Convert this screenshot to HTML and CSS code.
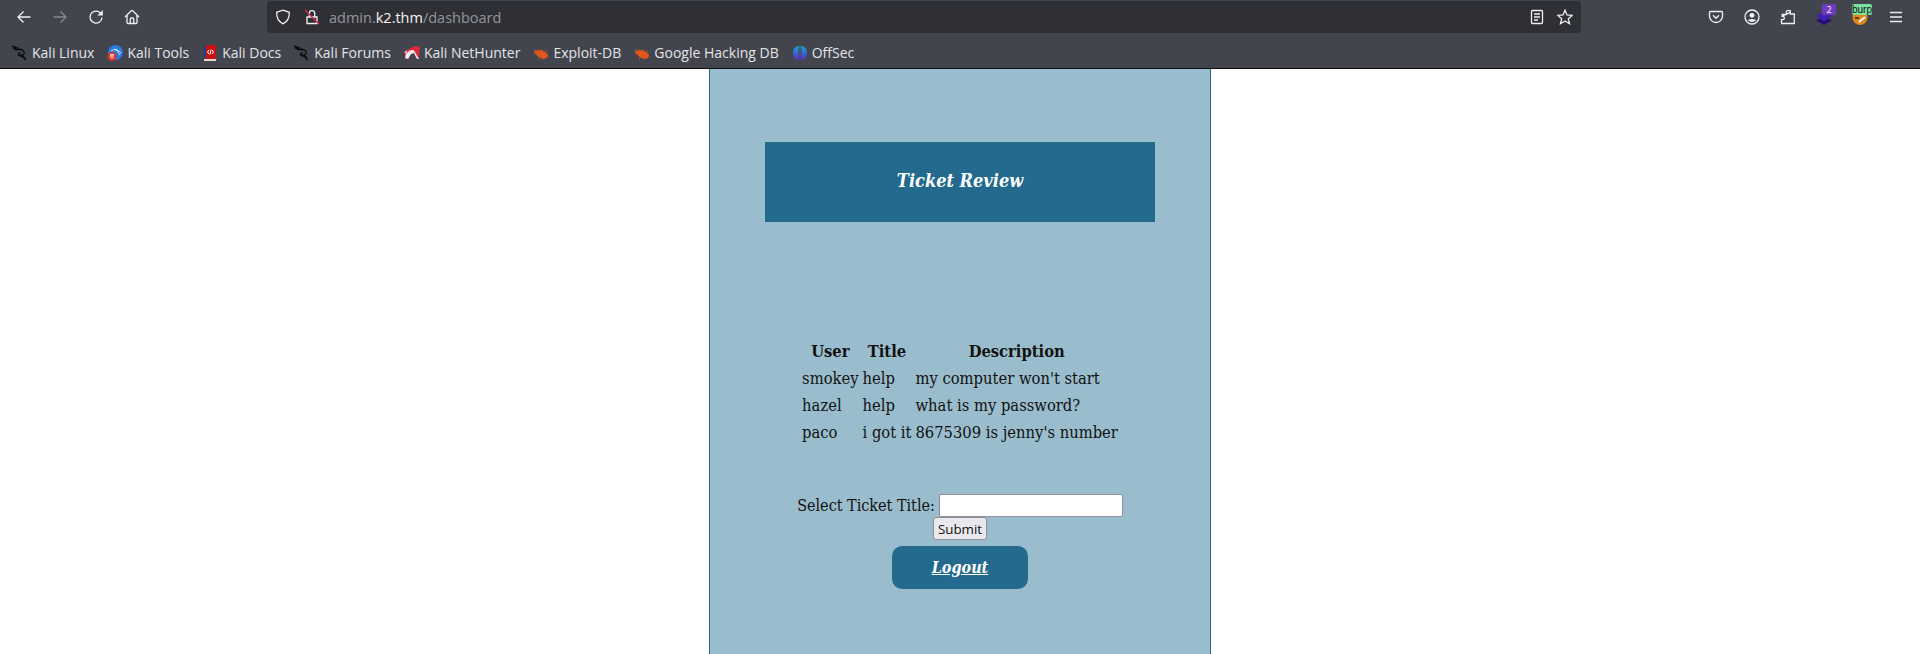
FILE: index.html
```html
<!DOCTYPE html>
<html>
<head>
    <title>Ticket Review</title>
    <link rel="stylesheet" href="styles.css">
</head>
<body>
    <div class="browser">
        <div class="toolbar">
            <div class="nav">
                <svg class="icon" viewBox="0 0 16 16"><path d="M14.500 8H2M7.500 2.500 2 8l5.500 5.500"/></svg>
                <svg class="icon dim" viewBox="0 0 16 16"><path d="M1.500 8H14M8.500 2.500 14 8l-5.500 5.500"/></svg>
                <svg class="icon" viewBox="0 0 16 16"><path d="M14 8.500A6 6 0 1 1 11.500 3.200L14 5.500"/><path class="solid" d="M14.800 1v5.500H9.300z"/></svg>
                <svg class="icon" viewBox="0 0 16 16"><path d="M1 8 7.300 1.700q.7-.6 1.400 0L15 8M3 6.500v7q0 1 1 1h8q1 0 1-1v-7M6.300 14.500V10q0-1 1-1h1.400q1 0 1 1v4.500"/></svg>
            </div>
            <div class="urlbar">
                <svg class="icon" viewBox="0 0 16 16"><path d="M8 1.200 14.300 3.300C14.500 9 12 13 8 14.800 4 13 1.500 9 1.700 3.300z"/></svg>
                <svg class="icon lock" viewBox="0 0 16 16"><path d="M3 8h10v6.500H3zM5.300 8V4.300a2.700 2.700 0 0 1 5.400 0V8"/><path class="strike" d="M1 1 15 15"/></svg>
                <span class="url">admin.<b>k2.thm</b>/dashboard</span>
                <span class="url-end">
                    <svg class="icon" viewBox="0 0 16 16"><path d="M3.500 1.500h9q1 0 1 1v11q0 1-1 1h-9q-1 0-1-1v-11q0-1 1-1zM5 5h6M5 8h6M5 11h4"/></svg>
                    <svg class="icon" viewBox="0 0 16 16"><path d="M8 1.200 10 6l5.200.4-3.900 3.300 1.200 5L8 12l-4.500 2.700 1.200-5L.8 6.400 6 6z"/></svg>
                </span>
            </div>
            <div class="tools">
                <svg class="icon" viewBox="0 0 16 16"><path d="M2.500 2.500h11q1 0 1 1V7a6.500 6.500 0 0 1-13 0V3.500q0-1 1-1zM5 6.300l3 3 3-3"/></svg>
                <svg class="icon" viewBox="0 0 16 16"><circle cx="8" cy="8" r="7"/><circle class="solid" cx="8" cy="6.300" r="2.400"/><path class="solid" d="M3.800 11.300q4.200-2.400 8.400 0-4.200 3.200-8.400 0z"/></svg>
                <svg class="icon" viewBox="0 0 16 16"><path d="M1.500 5.500h4.800V3.300a2 2 0 0 1 4 0V1h0M10.300 3.300V5h4v9.500H1.500v-3.800h1.200a1.700 1.700 0 0 0 0-3.400H1.500z"/></svg>
                <span class="ext">
                    <svg class="ext-icon" viewBox="0 0 16 16"><path fill="#2a0c78" d="M8 7 16 11.500 8 16 0 11.500z"/><path fill="#4420a8" d="M8 1.500 16 7 8 12.500 0 7z"/></svg>
                    <span class="badge purple">2</span>
                </span>
                <span class="ext">
                    <svg class="ext-icon" viewBox="0 0 16 16"><circle cx="8" cy="8.500" r="7.500" fill="#e2861c"/><path d="M3 9h4" stroke="#3a2410" stroke-width="1.500" fill="none"/><path d="M7 13l6-5" stroke="#fff" stroke-width="1.800" fill="none"/></svg>
                    <span class="badge green">burp</span>
                </span>
                <svg class="icon" viewBox="0 0 16 16"><path d="M2 3.500h12M2 8h12M2 12.500h12"/></svg>
            </div>
        </div>
        <div class="bookmarks">
            <span class="bm"><svg viewBox="0 0 16 16"><path class="dragon" d="M0 1l4 1.500-3 .5 4 .8-2 1 5-.5q5 1 4 4.500-1 2-4 1 4 1 5.500 5-2-3.500-6-4.300-3-1.500 1-3"/></svg>Kali Linux</span>
            <span class="bm"><svg viewBox="0 0 16 16"><circle cx="8.500" cy="7.500" r="7.500" fill="#2c7be0"/><path d="M4 6q5-4 10 2M7 4q4 1 6 6" stroke="#d8e8fa" fill="none"/><circle cx="5" cy="11.500" r="4.500" fill="#e23028"/><path d="M3 9.700h4M4 10v3.500M6 10v3.500" stroke="#fff"/></svg>Kali Tools</span>
            <span class="bm"><svg viewBox="0 0 16 16"><rect x="2" y="0" width="12" height="15" fill="#c81414"/><rect x="2" y="0" width="2" height="15" fill="#24408c"/><rect x="2" y="14" width="12" height="2" fill="#e8d8c8"/><path d="M7 5 5.500 7 7 9M10 5l1.500 2L10 9M9.200 4.500 7.800 9.500" stroke="#fff" fill="none"/></svg>Kali Docs</span>
            <span class="bm"><svg viewBox="0 0 16 16"><path class="dragon" d="M0 1l4 1.500-3 .5 4 .8-2 1 5-.5q5 1 4 4.500-1 2-4 1 4 1 5.500 5-2-3.500-6-4.300-3-1.500 1-3"/></svg>Kali Forums</span>
            <span class="bm"><svg viewBox="0 0 16 16"><path fill="#e0283c" d="M1 6 11 1l5 1-1 10-2 2-3-6-3 1-3 5H1z"/><path fill="#eee" d="M0 8 3 5l-2 8 3 1 3-5 3-1 3 6h2L10 5.500Q6 4 3 8z"/></svg>Kali NetHunter</span>
            <span class="bm"><svg viewBox="0 0 16 16"><g class="bug"><ellipse cx="9" cy="9.500" rx="6" ry="3.500" transform="rotate(20 9 9.500)"/><circle cx="3.500" cy="7.500" r="1.800"/><path d="M2 7 0 6M3 6 1.500 3.500M6 7 5 4M9 7l0-3M12 8l2-3M6 12l-1 3M10 13l0 2"/></g></svg>Exploit-DB</span>
            <span class="bm"><svg viewBox="0 0 16 16"><g class="bug"><ellipse cx="9" cy="9.500" rx="6" ry="3.500" transform="rotate(20 9 9.500)"/><circle cx="3.500" cy="7.500" r="1.800"/><path d="M2 7 0 6M3 6 1.500 3.500M6 7 5 4M9 7l0-3M12 8l2-3M6 12l-1 3M10 13l0 2"/></g></svg>Google Hacking DB</span>
            <span class="bm"><svg viewBox="0 0 16 16"><defs><linearGradient id="offsec" x1="0" y1="0" x2="0" y2="1"><stop offset="0" stop-color="#1fa0d8"/><stop offset="1" stop-color="#5a28c8"/></linearGradient></defs><path fill="url(#offsec)" d="M6.500.8V15A7.300 7.300 0 0 1 6.500.8zM9.500.8V15A7.300 7.300 0 0 0 9.500.8zM7.500 1h1v15h-1z"/></svg>OffSec</span>
        </div>
    </div>

    <div class="page">
        <div class="panel">
            <div class="heading">Ticket Review</div>
            <table class="tickets">
                <tr>
                    <th>User</th>
                    <th>Title</th>
                    <th>Description</th>
                </tr>
                <tr>
                    <td>smokey</td>
                    <td>help</td>
                    <td>my computer won't start</td>
                </tr>
                <tr>
                    <td>hazel</td>
                    <td>help</td>
                    <td>what is my password?</td>
                </tr>
                <tr>
                    <td>paco</td>
                    <td>i got it</td>
                    <td>8675309 is jenny's number</td>
                </tr>
            </table>
            <form class="ticket-form">
                <div class="form-row">
                    <label for="title">Select Ticket Title:</label>
                    <input type="text" id="title" />
                </div>
                <button type="button">Submit</button>
            </form>
            <a class="logout" href="#">Logout</a>
        </div>
    </div>
</body>
</html>
```

FILE: styles.css
```css
html, body {
    height: 100%;
}

body {
    margin: 0;
    background-color: #fff;
    display: flex;
    flex-direction: column;
    overflow: hidden;
    font-family: "DejaVu Serif Condensed", "DejaVu Serif", serif;
    font-size: 16px;
    color: #111;
}

.browser {
    background-color: #42454e;
    border-bottom: 1px solid #0c0c0d;
    font-family: "Open Sans", "Noto Sans", sans-serif;
    color: #e4e4e6;
}

.toolbar {
    display: flex;
    align-items: center;
    height: 34px;
}

.icon {
    width: 16px;
    height: 16px;
    fill: none;
    stroke: #f0f0f2;
    stroke-width: 1.300;
    flex: none;
}

.icon.dim {
    opacity: 0.4;
}

.icon .solid {
    fill: #f0f0f2;
    stroke: none;
}

.nav {
    display: flex;
    gap: 20px;
    width: 267px;
    padding-left: 16px;
    box-sizing: border-box;
}

.urlbar {
    display: flex;
    align-items: center;
    width: 1314px;
    height: 32px;
    background-color: #2f3036;
    border-radius: 4px;
    padding: 0 8px;
    box-sizing: border-box;
}

.lock {
    margin-left: 13px;
}

.lock .strike {
    stroke: #e22850;
}

.url {
    margin-left: 9px;
    font-size: 14.500px;
    color: #94959a;
}

.url b {
    font-weight: normal;
    color: #f4f4f6;
}

.url-end {
    margin-left: auto;
    display: flex;
    gap: 12px;
}

.tools {
    display: flex;
    align-items: center;
    gap: 20px;
    padding-left: 127px;
}

.ext {
    position: relative;
    width: 16px;
    height: 16px;
}

.ext-icon {
    display: block;
    width: 16px;
    height: 16px;
}

.badge {
    position: absolute;
    top: -5px;
    height: 11px;
    line-height: 11px;
    text-align: center;
    border-radius: 2px;
}

.purple {
    left: 6px;
    width: 14px;
    font-size: 9px;
    background-color: #6e3cc0;
    color: #fff;
}

.green {
    left: 0;
    width: 20px;
    font-family: "Liberation Sans", sans-serif;
    font-size: 10px;
    background-color: #7be0a0;
    color: #111;
}

.bookmarks {
    display: flex;
    align-items: center;
    gap: 13px;
    height: 34px;
    padding: 3px 0 0 12px;
    box-sizing: border-box;
    font-size: 14px;
}

.bm {
    display: flex;
    align-items: center;
    gap: 4px;
}

.bm svg {
    width: 16px;
    height: 16px;
}

.dragon {
    fill: none;
    stroke: #0c0c0d;
    stroke-width: 1.400;
}

.bug {
    fill: #e2561c;
    stroke: #e2561c;
    stroke-width: 0.600;
}

.page {
    flex: 1;
    display: flex;
    justify-content: center;
    min-height: 0;
}

.panel {
    width: 502px;
    box-sizing: border-box;
    background-color: #9abdcd;
    border: 1px solid #236a8e;
    border-width: 0 1px;
    padding-top: 73px;
    display: flex;
    flex-direction: column;
    align-items: center;
}

.heading {
    width: 390px;
    height: 80px;
    box-sizing: border-box;
    padding-top: 28px;
    background-color: #236a8e;
    color: #fff;
    font-weight: bold;
    font-style: italic;
    font-size: 18px;
    text-align: center;
}

.tickets {
    margin-top: 115px;
    border-spacing: 2px;
    font-size: 16.400px;
}

.tickets th,
.tickets td {
    padding: 1px;
    height: 25px;
    box-sizing: border-box;
}

.tickets td {
    text-align: left;
}

.ticket-form {
    margin-top: 47px;
    text-align: center;
}

.form-row {
    display: flex;
    align-items: center;
    justify-content: center;
    gap: 4px;
}

.ticket-form input {
    width: 184px;
    height: 23px;
    box-sizing: border-box;
    border: 1px solid #8f8f9d;
    border-radius: 2px;
    background-color: #fff;
    padding: 1px 2px;
}

.ticket-form button {
    display: block;
    margin: 0 auto;
    width: 54px;
    height: 23px;
    padding: 0;
    font-family: "Open Sans", "Noto Sans", sans-serif;
    font-size: 13.333px;
    color: #111;
    background-color: #e9e9ed;
    border: 1px solid #8f8f9d;
    border-radius: 3px;
}

.logout {
    margin-top: 6px;
    width: 136px;
    height: 43px;
    line-height: 44px;
    border-radius: 10px;
    background-color: #236a8e;
    color: #fff;
    font-weight: bold;
    font-style: italic;
    text-align: center;
}
```
